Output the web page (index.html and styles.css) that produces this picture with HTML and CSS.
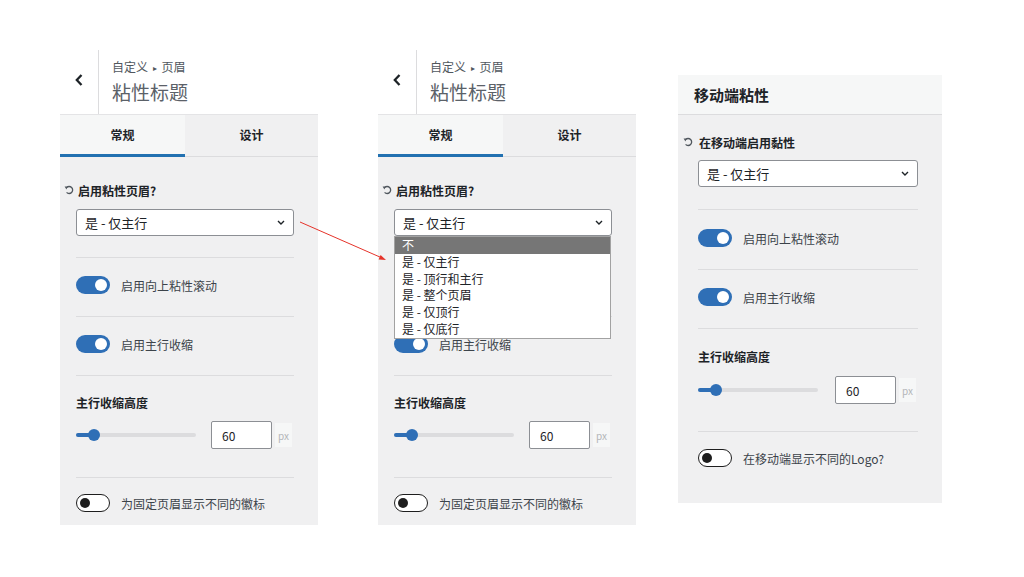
FILE: index.html
```html
<!DOCTYPE html>
<html lang="zh-CN">
<head>
<meta charset="utf-8">
<title>粘性标题</title>
<link rel="stylesheet" href="styles.css">
</head>
<body>
<div class="page">

  <section class="panel">
    <header class="ph">
      <div class="back"><svg width="8" height="12" viewBox="0 0 8 12"><polyline points="6.5,1 1.8,6 6.5,11" fill="none" stroke="#1d2327" stroke-width="2.3"/></svg></div>
      <div class="ptitle">
        <div class="crumb">自定义 <span class="tri">▸</span> 页眉</div>
        <div class="title">粘性标题</div>
      </div>
    </header>
    <nav class="tabs"><div class="tab active">常规</div><div class="tab">设计</div></nav>
    <div class="body">
      <div class="label"><svg class="reset" width="10" height="10" viewBox="0 0 10 10"><path d="M2.6 2.6 A3.5 3.5 0 1 1 2.6 7.4" fill="none" stroke="#50575e" stroke-width="1.3"/><path d="M0.6 1.4 L3.9 1.6 L2.4 4.4 Z" fill="#50575e"/></svg>启用粘性页眉?</div>
      <div class="select"><span>是 - 仅主行</span><svg width="8" height="5" viewBox="0 0 8 5"><polyline points="1,1 4,4 7,1" fill="none" stroke="#1d2327" stroke-width="1.4"/></svg></div>
      <div class="sec tog-sec"><span class="toggle on"></span><span class="tlabel">启用向上粘性滚动</span></div>
      <div class="sec tog-sec"><span class="toggle on"></span><span class="tlabel">启用主行收缩</span></div>
      <div class="sec slide-sec">
        <div class="heading">主行收缩高度</div>
        <div class="srow">
          <div class="track"><span class="fill"></span><span class="thumb"></span></div>
          <div class="num">60</div>
          <div class="unit">px</div>
        </div>
      </div>
      <div class="sec last-sec"><span class="toggle off"></span><span class="tlabel">为固定页眉显示不同的徽标</span></div>
    </div>
  </section>

  <section class="panel">
    <header class="ph">
      <div class="back"><svg width="8" height="12" viewBox="0 0 8 12"><polyline points="6.5,1 1.8,6 6.5,11" fill="none" stroke="#1d2327" stroke-width="2.3"/></svg></div>
      <div class="ptitle">
        <div class="crumb">自定义 <span class="tri">▸</span> 页眉</div>
        <div class="title">粘性标题</div>
      </div>
    </header>
    <nav class="tabs"><div class="tab active">常规</div><div class="tab">设计</div></nav>
    <div class="body">
      <div class="label"><svg class="reset" width="10" height="10" viewBox="0 0 10 10"><path d="M2.6 2.6 A3.5 3.5 0 1 1 2.6 7.4" fill="none" stroke="#50575e" stroke-width="1.3"/><path d="M0.6 1.4 L3.9 1.6 L2.4 4.4 Z" fill="#50575e"/></svg>启用粘性页眉?</div>
      <div class="select open"><span>是 - 仅主行</span><svg width="8" height="5" viewBox="0 0 8 5"><polyline points="1,1 4,4 7,1" fill="none" stroke="#1d2327" stroke-width="1.4"/></svg>
        <ul class="dd">
          <li class="hl">不</li>
          <li>是 - 仅主行</li>
          <li>是 - 顶行和主行</li>
          <li>是 - 整个页眉</li>
          <li>是 - 仅顶行</li>
          <li>是 - 仅底行</li>
        </ul>
      </div>
      <div class="sec tog-sec hidden-under"><span class="toggle on"></span><span class="tlabel">启用向上粘性滚动</span></div>
      <div class="sec tog-sec"><span class="toggle on"></span><span class="tlabel">启用主行收缩</span></div>
      <div class="sec slide-sec">
        <div class="heading">主行收缩高度</div>
        <div class="srow">
          <div class="track"><span class="fill"></span><span class="thumb"></span></div>
          <div class="num">60</div>
          <div class="unit">px</div>
        </div>
      </div>
      <div class="sec last-sec"><span class="toggle off"></span><span class="tlabel">为固定页眉显示不同的徽标</span></div>
    </div>
  </section>

  <section class="panel panel-m">
    <header class="mh">移动端粘性</header>
    <div class="body">
      <div class="label"><svg class="reset" width="10" height="10" viewBox="0 0 10 10"><path d="M2.6 2.6 A3.5 3.5 0 1 1 2.6 7.4" fill="none" stroke="#50575e" stroke-width="1.3"/><path d="M0.6 1.4 L3.9 1.6 L2.4 4.4 Z" fill="#50575e"/></svg>在移动端启用黏性</div>
      <div class="select"><span>是 - 仅主行</span><svg width="8" height="5" viewBox="0 0 8 5"><polyline points="1,1 4,4 7,1" fill="none" stroke="#1d2327" stroke-width="1.4"/></svg></div>
      <div class="sec tog-sec first"><span class="toggle on"></span><span class="tlabel">启用向上粘性滚动</span></div>
      <div class="sec tog-sec"><span class="toggle on"></span><span class="tlabel">启用主行收缩</span></div>
      <div class="sec slide-sec">
        <div class="heading">主行收缩高度</div>
        <div class="srow">
          <div class="track"><span class="fill"></span><span class="thumb"></span></div>
          <div class="num">60</div>
          <div class="unit">px</div>
        </div>
      </div>
      <div class="sec last-sec"><span class="toggle off"></span><span class="tlabel">在移动端显示不同的Logo?</span></div>
    </div>
  </section>

  <svg class="annot" width="1024" height="577" viewBox="0 0 1024 577">
    <line x1="300" y1="222" x2="381" y2="257.5" stroke="#e5332a" stroke-width="1"/>
    <polygon points="386,260 378.6,259.5 380.6,254.9" fill="#e5332a"/>
  </svg>
</div>
</body>
</html>
```

FILE: styles.css
```css
* { box-sizing: border-box; }
html, body { margin: 0; padding: 0; background: #ffffff; }
body {
  font-family: "Noto Sans CJK SC", "Noto Sans", sans-serif;
  color: #1d2327;
  width: 1024px;
  height: 577px;
  overflow: hidden;
}
.page {
  position: relative;
  display: flex;
  align-items: flex-start;
  padding: 50px 0 0 60px;
  height: 577px;
}
.panel {
  width: 258px;
  margin-right: 60px;
  background: #f0f0f1;
  display: flex;
  flex-direction: column;
}
.panel-m {
  width: 264px;
  margin-right: 0;
  margin-top: 25px;
  margin-left: -18px;
}

/* header */
.ph {
  height: 65px;
  background: #ffffff;
  display: flex;
  border-bottom: 1px solid #e4e4e6;
}
.back {
  width: 39px;
  border-right: 1px solid #dcdcde;
  display: flex;
  align-items: center;
  justify-content: center;
  padding-bottom: 4px;
}
.ptitle {
  padding: 9px 0 0 13px;
  color: #50575e;
}
.crumb {
  font-size: 12px;
  line-height: 16px;
}
.tri { font-size: 8px; vertical-align: 1px; margin: 0 2px; }
.title {
  font-size: 19px;
  line-height: 26px;
  margin-top: 3px;
  font-weight: 400;
  color: #5b6168;
}

/* tabs */
.tabs {
  display: flex;
  height: 42px;
}
.tab {
  flex: 0 0 133px;
  display: flex;
  align-items: center;
  justify-content: center;
  font-size: 12px;
  font-weight: 700;
  background: #f0f0f1;
  border-bottom: 1px solid #dcdcde;
  padding-bottom: 3px;
}
.tab.active {
  flex: 0 0 125px;
  background: #f6f7f7;
  border-bottom: 3px solid #2271b1;
  padding-bottom: 1px;
}

/* body */
.body {
  padding: 25px 24px 0 16px;
}
.label {
  display: flex;
  align-items: center;
  gap: 4px;
  margin-left: -12px;
  height: 16px;
  font-size: 12px;
  font-weight: 700;
}
.reset { flex: none; }
.select {
  position: relative;
  margin-top: 11px;
  margin-bottom: 21px;
  height: 27px;
  background: #ffffff;
  border: 1px solid #8c8f94;
  border-radius: 3px;
  padding: 0 8px 0 8px;
  display: flex;
  align-items: center;
  justify-content: space-between;
  font-size: 13px;
}
.dd {
  position: absolute;
  left: -1px;
  top: 26px;
  width: 217px;
  margin: 0;
  padding: 0;
  list-style: none;
  background: #ffffff;
  border: 1px solid #a2a2a2;
  z-index: 5;
  font-size: 12px;
}
.dd li {
  height: 16.8px;
  line-height: 16.8px;
  padding-left: 7px;
  color: #1d2327;
}
.dd li.hl {
  background: #767676;
  color: #ffffff;
}
.hidden-under { visibility: hidden; }

.sec { border-top: 1px solid #dcdcde; }
.tog-sec {
  display: flex;
  align-items: center;
  gap: 11px;
  padding: 18px 0 22px;
}
.toggle {
  position: relative;
  flex: none;
  width: 34px;
  height: 18px;
  border-radius: 9px;
}
.toggle.on { background: #2f6fb6; }
.toggle.on::after {
  content: "";
  position: absolute;
  right: 3px;
  top: 3px;
  width: 12px;
  height: 12px;
  border-radius: 50%;
  background: #ffffff;
}
.toggle.off {
  background: #ffffff;
  border: 1.5px solid #1e1e1e;
}
.toggle.off::after {
  content: "";
  position: absolute;
  left: 2.5px;
  top: 2.5px;
  width: 10px;
  height: 10px;
  border-radius: 50%;
  background: #1e1e1e;
}
.tlabel {
  font-size: 12px;
  color: #3c434a;
}

.slide-sec { padding: 19px 0 28px; }
.heading {
  font-size: 12px;
  font-weight: 700;
  line-height: 16px;
}
.srow {
  display: flex;
  align-items: center;
  height: 28px;
  margin-top: 10px;
}
.track {
  position: relative;
  width: 120px;
  height: 4px;
  border-radius: 2px;
  background: #dcdcde;
}
.fill {
  position: absolute;
  left: 0;
  top: 0;
  width: 18px;
  height: 4px;
  border-radius: 2px;
  background: #2f6fb6;
}
.thumb {
  position: absolute;
  left: 12px;
  top: -4px;
  width: 12px;
  height: 12px;
  border-radius: 50%;
  background: #2f6fb6;
}
.num {
  margin-left: 15px;
  width: 61px;
  height: 28px;
  background: #ffffff;
  border: 1px solid #8c8f94;
  border-radius: 2px;
  padding-left: 10px;
  display: flex;
  align-items: center;
  font-size: 12px;
}
.unit {
  margin-left: 3px;
  width: 17px;
  height: 24px;
  background: #f6f7f7;
  color: #b4b6b9;
  font-size: 10px;
  display: flex;
  align-items: center;
  justify-content: center;
}
.last-sec {
  display: flex;
  align-items: center;
  gap: 11px;
  padding: 16px 0 13px;
}

/* mobile panel */
.mh {
  height: 40px;
  background: #f6f7f7;
  border-bottom: 1px solid #dcdcde;
  padding-left: 16px;
  display: flex;
  align-items: center;
  font-size: 15px;
  font-weight: 700;
}
.panel-m .body { padding: 19px 24px 0 20px; }
.panel-m .label { margin-left: -15px; gap: 6px; }
.panel-m .select { margin-top: 10px; margin-bottom: 22px; }
.panel-m .tog-sec.first { padding: 19px 0 22px; }
.panel-m .slide-sec { padding: 20px 0 27px; }
.panel-m .srow { margin-top: 11px; }
.panel-m .num { margin-left: 17px; }
.panel-m .last-sec { padding: 17px 0 36px; }

.annot {
  position: absolute;
  left: 0;
  top: 0;
  pointer-events: none;
}
```
